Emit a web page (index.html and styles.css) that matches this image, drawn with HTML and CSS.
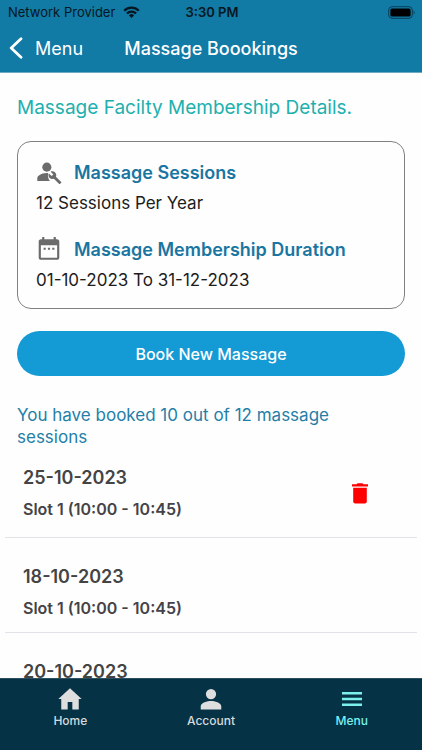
FILE: index.html
```html
<!DOCTYPE html>
<html lang="en">
<head>
<meta charset="utf-8">
<meta name="viewport" content="width=device-width, initial-scale=1">
<title>Massage Boookings</title>
<link rel="stylesheet" href="styles.css">
</head>
<body>
<div class="app">
  <header class="header">
    <div class="status">
      <div class="carrier">
        <span>Network Provider</span>
        <svg width="17" height="12" viewBox="0 0 17 12" fill="none" stroke="#061722" stroke-width="2.3"><path d="M1.2 4.7a10.3 10.3 0 0 1 14.6 0"/><path d="M3.9 7.5a6.5 6.5 0 0 1 9.2 0"/><path d="M8.5 12 5.9 9.4a3.7 3.7 0 0 1 5.2 0z" fill="#061722" stroke="none"/></svg>
      </div>
      <span class="clock">3:30 PM</span>
      <svg class="battery" width="28" height="13" viewBox="0 0 28 13"><rect x=".7" y=".7" width="23.6" height="11.6" rx="3.3" fill="none" stroke="#07405c"/><rect x="2.4" y="2.4" width="20.2" height="8.2" rx="1.6" fill="#000"/><path d="M25.6 4.6v4c1.4-.5 1.4-3.500 0-4z" fill="#07405c"/></svg>
    </div>
    <div class="titlebar">
      <a class="back" href="#menu">
        <svg width="14" height="22" viewBox="0 0 14 22" fill="none" stroke="#fff" stroke-width="2.8" stroke-linecap="round" stroke-linejoin="round"><path d="M12 1.700 2.200 11l9.800 9.300"/></svg>
        <span>Menu</span>
      </a>
      <h1 class="title">Massage Boookings</h1>
    </div>
  </header>

  <main class="content">
    <h2 class="heading">Massage Facilty Membership Details.</h2>

    <section class="card">
      <div class="fact">
        <h3 class="label">
          <svg width="26" height="26" viewBox="0 0 24 24" fill="#6b6b6b"><circle cx="10" cy="7.500" r="4.200"/><path d="M11.200 13.050C10.800 13 10.400 13 10 13c-2.600 0-5 .7-7 1.900-1.200.7-1.800 1.700-1.800 2.900V20.200H12.800A7.500 7.500 0 0 1 11 16c0-1 .1-2 .2-2.950z"/><path d="m23.300 21.200-4.900-4.900c.6-1.300.3-2.900-.7-3.900-1.200-1.200-2.900-1.400-4.200-.7l2.500 2.500-1.600 1.600-2.500-2.500c-.7 1.300-.5 3 .7 4.200 1 1 2.600 1.300 3.900.7l4.900 4.900c.2.200.5.200.7 0l1.200-1.200c.2-.2.200-.5 0-.7z"/></svg>
          <span>Massage Sessions</span>
        </h3>
        <p class="value">12 Sessions Per Year</p>
      </div>
      <div class="fact">
        <h3 class="label">
          <svg width="26" height="26" viewBox="0 0 24 24" fill="#6b6b6b"><path fill-rule="evenodd" d="M19.500 3H18.300V1H16.300V3H7.700V1H5.700V3H4.500C3.300 3 2.500 3.900 2.500 5V20C2.500 21.100 3.300 22 4.500 22H19.500C20.600 22 21.500 21.100 21.500 20V5C21.500 3.900 20.600 3 19.500 3ZM19.500 20H4.500V8.500H19.500Z"/><path d="M7 10.800h2v2H7zm4 0h2v2h-2zm4 0h2v2h-2z"/></svg>
          <span>Massage Membership Duration</span>
        </h3>
        <p class="value">01-10-2023 To 31-12-2023</p>
      </div>
    </section>

    <button class="book" type="button">Book New Massage</button>

    <p class="summary">You have booked 10 out of 12 massage sessions</p>

    <ul class="bookings">
      <li class="booking">
        <div class="details">
          <p class="date">25-10-2023</p>
          <p class="slot">Slot 1 (10:00 - 10:45)</p>
        </div>
        <button class="delete" type="button" aria-label="Delete booking">
          <svg width="16" height="21" viewBox="0 0 16 21" fill="#fe0000"><path d="M0 1.300h4.500L5.600.2h4.800l1.100 1.100H16v2.200H0z"/><path d="M1.200 4.700h13.600v13.800a2 2 0 0 1-2 2H3.200a2 2 0 0 1-2-2z"/></svg>
        </button>
      </li>
      <li class="booking">
        <div class="details">
          <p class="date">18-10-2023</p>
          <p class="slot">Slot 1 (10:00 - 10:45)</p>
        </div>
      </li>
      <li class="booking">
        <div class="details">
          <p class="date">20-10-2023</p>
        </div>
      </li>
    </ul>
  </main>

  <nav class="tabs">
    <a class="tab" href="#home">
      <svg width="28" height="28" viewBox="0 0 24 24" fill="#dedede"><path d="M10 21v-6.500h4V21h5.500v-9H22L12 2.800 2 12h2.500v9z"/></svg>
      <span>Home</span>
    </a>
    <a class="tab" href="#account">
      <svg width="28" height="28" viewBox="0 0 24 24" fill="#dedede"><circle cx="12" cy="7.800" r="4.400"/><path d="M12 13.800c-3 0-8.800 1.500-8.800 4.500V21h17.600v-2.700c0-3-5.800-4.500-8.800-4.500z"/></svg>
      <span>Account</span>
    </a>
    <a class="tab active" href="#menu">
      <svg width="28" height="28" viewBox="0 0 28 28" fill="#7bf0ee"><path d="M4 7h20v2.400H4zm0 5.800h20v2.400H4zm0 5.800h20V21H4z"/></svg>
      <span>Menu</span>
    </a>
  </nav>
</div>
</body>
</html>
```
FILE: styles.css
```css
* {
  box-sizing: border-box;
}

body,
h1,
h2,
h3,
p,
ul {
  margin: 0;
  padding: 0;
}

body {
  font-family: Inter, "Liberation Sans", sans-serif;
  background: #fefefe;
}

a {
  text-decoration: none;
}

svg {
  display: block;
  flex: none;
}

.app {
  display: flex;
  flex-direction: column;
  height: 100vh;
}

.header {
  flex: none;
  background: #117aa5;
  border-bottom: 1px solid #6fa9c0;
}

.status {
  display: grid;
  grid-template-columns: 1fr auto 1fr;
  align-items: center;
  height: 24px;
  padding: 0 6px 0 8px;
  font-size: 13px;
  color: #061722;
}

.carrier {
  display: flex;
  align-items: center;
  gap: 8px;
}

.clock {
  font-weight: 600;
}

.battery {
  justify-self: end;
}

.titlebar {
  display: grid;
  grid-template-columns: 1fr auto 1fr;
  align-items: center;
  height: 48px;
  padding: 0 9px;
  color: #fff;
}

.back {
  display: flex;
  align-items: center;
  gap: 12px;
  font-size: 18px;
  color: #fff;
}

.title {
  font-size: 18px;
  font-weight: 500;
}

.content {
  flex: 1;
  min-height: 0;
  overflow: hidden;
  padding: 22px 17px 0;
}

.heading {
  font-size: 19px;
  line-height: 26px;
  font-weight: 400;
  color: #20b0ae;
}

.card {
  display: grid;
  gap: 21px;
  margin-top: 20px;
  padding: 17px 18px 16px;
  border: 1px solid #808080;
  border-radius: 14px;
}

.label {
  display: flex;
  align-items: center;
  gap: 12px;
  height: 26px;
  font-size: 18px;
  font-weight: 600;
  color: #1a76a1;
}

.value {
  margin-top: 6px;
  font-size: 17px;
  line-height: 24px;
  color: #1c1c1c;
}

.book {
  display: block;
  width: 100%;
  height: 45px;
  margin-top: 22px;
  border: 0;
  border-radius: 23px;
  background: #149ad4;
  font: 500 16px Inter, "Liberation Sans", sans-serif;
  color: #fff;
}

.summary {
  margin-top: 28px;
  padding-right: 20px;
  font-size: 17px;
  line-height: 22px;
  color: #247fa8;
}

.bookings {
  margin: 0 -12px;
  list-style: none;
}

.booking {
  display: flex;
  align-items: center;
  justify-content: space-between;
  padding: 26px 49px 12px 18px;
  border-bottom: 1px solid #e2e2e8;
}

.booking:first-child {
  padding-top: 17px;
  padding-bottom: 16px;
}

.date {
  font-size: 18px;
  line-height: 26px;
  font-weight: 600;
  color: #444;
}

.slot {
  margin-top: 6px;
  font-size: 16px;
  line-height: 24px;
  font-weight: 600;
  color: #444348;
}

.delete {
  padding: 0;
  border: 0;
  background: none;
}

.tabs {
  flex: none;
  display: grid;
  grid-template-columns: repeat(3, 1fr);
  height: 72px;
  padding-top: 6px;
  border-top: 1px solid #2a4f60;
  background: #063246;
}

.tab {
  display: flex;
  flex-direction: column;
  align-items: center;
  font-size: 12px;
  line-height: 16px;
  font-weight: 500;
  color: #d5dade;
}

.active {
  color: #7bf0ee;
}
```
